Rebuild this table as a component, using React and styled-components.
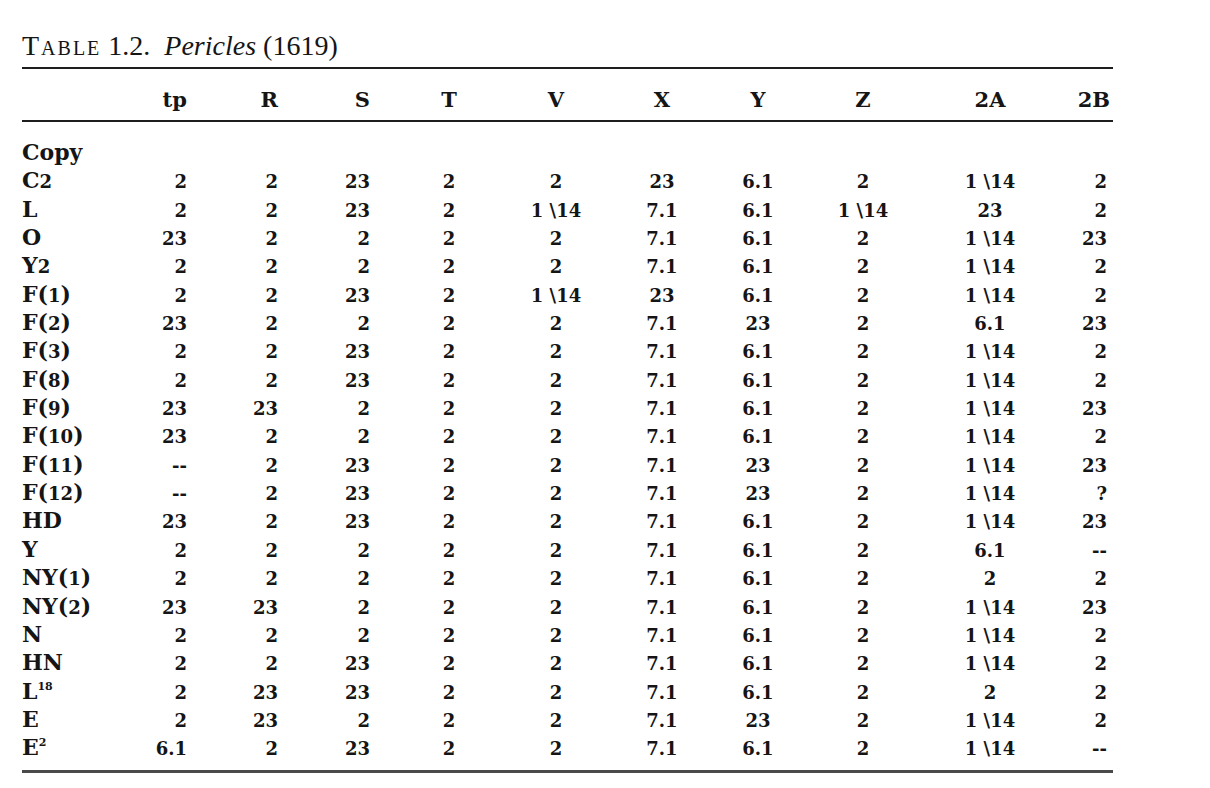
import React from 'react';
import styled, { createGlobalStyle } from 'styled-components';

const GlobalStyle = createGlobalStyle`
  html, body {
    margin: 0;
    background: #fff;
  }
  body {
    font-family: "DejaVu Serif", "Liberation Serif", serif;
    color: #151515;
  }
`;

// label | tp | R | S | T | V | X | Y | Z | 2A | 2B
const COLUMNS = '108px 57px 91px 92px 158px 56px 156px 36px 174px 80px 83px';
const ALIGN = ['left', 'right', 'right', 'right', 'center', 'center', 'center', 'center', 'center', 'center', 'right'];

const Page = styled.div`
  padding: 30px 0 0 22px;
  width: 1091px;
`;

const Caption = styled.div`
  font-family: "Liberation Serif", serif;
  font-size: 28px;
  line-height: 32px;
  margin-bottom: 5px;
  white-space: pre;
`;

const SmallCaps = styled.span`
  font-variant: small-caps;
  letter-spacing: 2px;
`;

const Title = styled.i`
  font-style: italic;
`;

const TableHead = styled.div`
  border-top: 2px solid #1e1e1e;
  border-bottom: 2px solid #1e1e1e;
  padding: 16px 0 5px;
`;

const TableBody = styled.div`
  padding: 16px 0 8px;
  border-bottom: 3px solid #4a4a4a;
`;

const Row = styled.div`
  display: grid;
  grid-template-columns: ${COLUMNS};
  align-items: baseline;
  height: ${p => (p.$head ? '30px' : '28.35px')};
`;

const Cell = styled.span`
  justify-self: ${p => (p.$align === 'right' ? 'end' : p.$align === 'center' ? 'center' : 'start')};
  padding-right: ${p => p.$pad || 0}px;
  white-space: pre;
  line-height: 28px;
`;

const HeadCell = styled(Cell)`
  font-weight: 700;
  font-size: 21px;
  line-height: 30px;
`;

const Label = styled(Cell)`
  font-size: 22px;
  font-weight: 600;
`;

const Value = styled(Cell)`
  font-size: 18px;
  font-weight: 700;
`;

const Fig = styled.span`
  font-size: 0.82em;
  font-weight: 700;
`;

const Sup = styled.sup`
  font-size: 0.5em;
  font-weight: 700;
  vertical-align: 0.85em;
  line-height: 0;
`;

const HEADERS = ['', 'tp', 'R', 'S', 'T', 'V', 'X', 'Y', 'Z', '2A', '2B'];

const ROWS = [
  ['C2', '2', '2', '23', '2', '2', '23', '6.1', '2', '1 \\14', '2'],
  ['L', '2', '2', '23', '2', '1 \\14', '7.1', '6.1', '1 \\14', '23', '2'],
  ['O', '23', '2', '2', '2', '2', '7.1', '6.1', '2', '1 \\14', '23'],
  ['Y2', '2', '2', '2', '2', '2', '7.1', '6.1', '2', '1 \\14', '2'],
  ['F(1)', '2', '2', '23', '2', '1 \\14', '23', '6.1', '2', '1 \\14', '2'],
  ['F(2)', '23', '2', '2', '2', '2', '7.1', '23', '2', '6.1', '23'],
  ['F(3)', '2', '2', '23', '2', '2', '7.1', '6.1', '2', '1 \\14', '2'],
  ['F(8)', '2', '2', '23', '2', '2', '7.1', '6.1', '2', '1 \\14', '2'],
  ['F(9)', '23', '23', '2', '2', '2', '7.1', '6.1', '2', '1 \\14', '23'],
  ['F(10)', '23', '2', '2', '2', '2', '7.1', '6.1', '2', '1 \\14', '2'],
  ['F(11)', '--', '2', '23', '2', '2', '7.1', '23', '2', '1 \\14', '23'],
  ['F(12)', '--', '2', '23', '2', '2', '7.1', '23', '2', '1 \\14', '?'],
  ['HD', '23', '2', '23', '2', '2', '7.1', '6.1', '2', '1 \\14', '23'],
  ['Y', '2', '2', '2', '2', '2', '7.1', '6.1', '2', '6.1', '--'],
  ['NY(1)', '2', '2', '2', '2', '2', '7.1', '6.1', '2', '2', '2'],
  ['NY(2)', '23', '23', '2', '2', '2', '7.1', '6.1', '2', '1 \\14', '23'],
  ['N', '2', '2', '2', '2', '2', '7.1', '6.1', '2', '1 \\14', '2'],
  ['HN', '2', '2', '23', '2', '2', '7.1', '6.1', '2', '1 \\14', '2'],
  ['L^18', '2', '23', '23', '2', '2', '7.1', '6.1', '2', '2', '2'],
  ['E', '2', '23', '2', '2', '2', '7.1', '23', '2', '1 \\14', '2'],
  ['E^2', '6.1', '2', '23', '2', '2', '7.1', '6.1', '2', '1 \\14', '--'],
];

// digits in the copy sigla are set smaller, like old-style figures
function renderLabel(text) {
  const [base, sup] = text.split('^');
  const parts = base.split(/(\d+)/).filter(Boolean).map((p, i) =>
    /\d/.test(p) ? <Fig key={i}>{p}</Fig> : p
  );
  return (
    <>
      {parts}
      {sup && <Sup>{sup}</Sup>}
    </>
  );
}

export default function App() {
  return (
    <Page>
      <GlobalStyle />
      <Caption>
        <SmallCaps>Table</SmallCaps> 1.2.  <Title>Pericles</Title> (1619)
      </Caption>
      <TableHead>
        <Row $head>
          {HEADERS.map((h, i) => (
            <HeadCell key={i} $align={ALIGN[i]} $pad={i === 10 ? 3 : 0}>{h}</HeadCell>
          ))}
        </Row>
      </TableHead>
      <TableBody>
        <Row>
          <Label $align="left">Copy</Label>
        </Row>
        {ROWS.map(row => (
          <Row key={row[0]}>
            <Label $align="left">{renderLabel(row[0])}</Label>
            {row.slice(1).map((v, i) => (
              <Value key={i} $align={ALIGN[i + 1]} $pad={i === 9 ? 6 : 0}>{v}</Value>
            ))}
          </Row>
        ))}
      </TableBody>
    </Page>
  );
}
